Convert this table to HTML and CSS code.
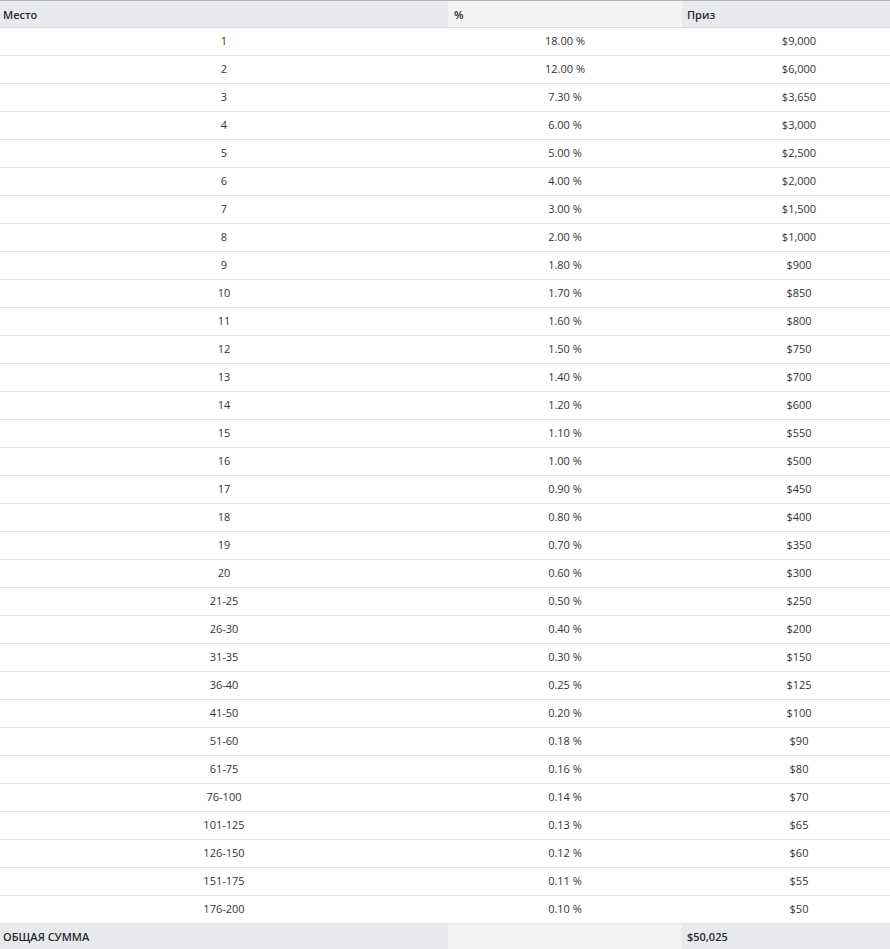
FILE: index.html
```html
<!DOCTYPE html>
<html lang="ru">
<head>
<meta charset="utf-8">
<link rel="stylesheet" href="styles.css">
</head>
<body>
<table class="prize">
<thead>
<tr><th class="c1">Место</th><th class="c2">%</th><th class="c3">Приз</th></tr>
</thead>
<tbody>
<tr><td>1</td><td>18.00 %</td><td>$9,000</td></tr>
<tr><td>2</td><td>12.00 %</td><td>$6,000</td></tr>
<tr><td>3</td><td>7.30 %</td><td>$3,650</td></tr>
<tr><td>4</td><td>6.00 %</td><td>$3,000</td></tr>
<tr><td>5</td><td>5.00 %</td><td>$2,500</td></tr>
<tr><td>6</td><td>4.00 %</td><td>$2,000</td></tr>
<tr><td>7</td><td>3.00 %</td><td>$1,500</td></tr>
<tr><td>8</td><td>2.00 %</td><td>$1,000</td></tr>
<tr><td>9</td><td>1.80 %</td><td>$900</td></tr>
<tr><td>10</td><td>1.70 %</td><td>$850</td></tr>
<tr><td>11</td><td>1.60 %</td><td>$800</td></tr>
<tr><td>12</td><td>1.50 %</td><td>$750</td></tr>
<tr><td>13</td><td>1.40 %</td><td>$700</td></tr>
<tr><td>14</td><td>1.20 %</td><td>$600</td></tr>
<tr><td>15</td><td>1.10 %</td><td>$550</td></tr>
<tr><td>16</td><td>1.00 %</td><td>$500</td></tr>
<tr><td>17</td><td>0.90 %</td><td>$450</td></tr>
<tr><td>18</td><td>0.80 %</td><td>$400</td></tr>
<tr><td>19</td><td>0.70 %</td><td>$350</td></tr>
<tr><td>20</td><td>0.60 %</td><td>$300</td></tr>
<tr><td>21-25</td><td>0.50 %</td><td>$250</td></tr>
<tr><td>26-30</td><td>0.40 %</td><td>$200</td></tr>
<tr><td>31-35</td><td>0.30 %</td><td>$150</td></tr>
<tr><td>36-40</td><td>0.25 %</td><td>$125</td></tr>
<tr><td>41-50</td><td>0.20 %</td><td>$100</td></tr>
<tr><td>51-60</td><td>0.18 %</td><td>$90</td></tr>
<tr><td>61-75</td><td>0.16 %</td><td>$80</td></tr>
<tr><td>76-100</td><td>0.14 %</td><td>$70</td></tr>
<tr><td>101-125</td><td>0.13 %</td><td>$65</td></tr>
<tr><td>126-150</td><td>0.12 %</td><td>$60</td></tr>
<tr><td>151-175</td><td>0.11 %</td><td>$55</td></tr>
<tr><td>176-200</td><td>0.10 %</td><td>$50</td></tr>
</tbody>
<tfoot>
<tr><td class="c1">ОБЩАЯ СУММА</td><td class="c2"></td><td class="c3">$50,025</td></tr>
</tfoot>
</table>
</body>
</html>
```

FILE: styles.css
```css
html, body {
  margin: 0;
  padding: 0;
  background: #fff;
  overflow: hidden;
}
.prize {
  width: 916px;
  border-collapse: collapse;
  table-layout: fixed;
  font-family: "Open Sans", "Liberation Sans", sans-serif;
  font-size: 11px;
  color: #333;
}
.prize th, .prize td {
  padding: 0 0 2px 0;
  height: 25px;
  vertical-align: middle;
}
.prize thead th {
  border-top: 1px solid #b4b4b8;
  border-bottom: 1px solid #dcdcdf;
  background: #e9eaee;
  font-weight: 600;
  text-align: left;
  padding-bottom: 0;
  height: 26px;
  color: #2b2b2b;
}
.prize .c1 { width: 445px; padding-left: 3px; }
.prize .c2 { width: 228px; padding-left: 6px; }
.prize .c3 { width: 229px; padding-left: 5px; }
.prize thead .c2 { background: #f3f3f4; }
.prize tbody td {
  text-align: center;
  border-bottom: 1px solid #e3e3e6;
}
.prize tfoot td {
  background: #e9eaee;
  font-weight: 600;
  text-align: left;
  color: #2b2b2b;
}
.prize tfoot .c2 { background: #f3f3f4; }
```
